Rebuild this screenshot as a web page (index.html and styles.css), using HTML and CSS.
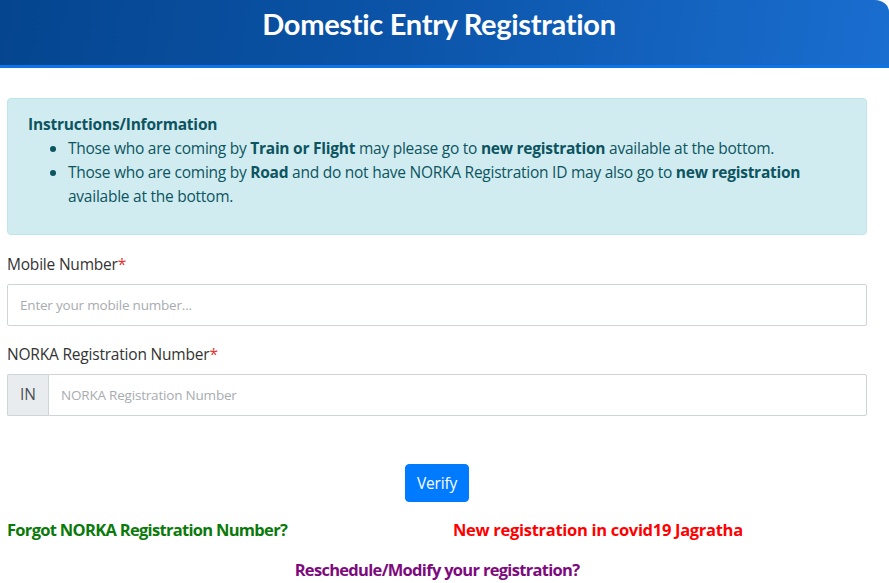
FILE: index.html
```html
<!DOCTYPE html>
<html lang="en">
<head>
<meta charset="utf-8">
<title>Domestic Entry Registration</title>
<link rel="stylesheet" href="styles.css">
</head>
<body>
<header class="banner">
  <h1 class="banner-title">Domestic Entry Registration</h1>
</header>
<main class="page">
  <section class="alert">
    <h2 class="alert-title">Instructions/Information</h2>
    <ul class="alert-list">
      <li>Those who are coming by <b>Train or Flight</b> may please go to <b>new registration</b> available at the bottom.</li>
      <li>Those who are coming by <b>Road</b> and do not have NORKA Registration ID may also go to <b>new registration</b> available at the bottom.</li>
    </ul>
  </section>
  <form class="form">
    <div class="field">
      <label class="label">Mobile Number<span class="req">*</span></label>
      <input class="input" type="text" placeholder="Enter your mobile number...">
    </div>
    <div class="field">
      <label class="label">NORKA Registration Number<span class="req">*</span></label>
      <div class="input-group">
        <span class="addon">IN</span>
        <input class="input input-joined" type="text" placeholder="NORKA Registration Number">
      </div>
    </div>
    <div class="actions">
      <button type="button" class="btn">Verify</button>
    </div>
  </form>
  <div class="links">
    <a class="link link-green" href="#">Forgot NORKA Registration Number?</a>
    <a class="link link-red" href="#">New registration in covid19 Jagratha</a>
  </div>
  <div class="links-center">
    <a class="link link-purple" href="#">Reschedule/Modify your registration?</a>
  </div>
</main>
</body>
</html>
```

FILE: styles.css
```css
html, body {
  margin: 0;
  padding: 0;
  background: #fff;
}
body {
  font-family: "Open Sans", "Noto Sans", sans-serif;
  color: #212529;
  font-size: 15.5px;
  line-height: 1.5;
}
.banner {
  height: 65px;
  background: linear-gradient(100deg, #05458f 0%, #0b54a8 45%, #1a6ed0 100%);
  border-bottom: 3px solid #0d73e6;
  border-top-right-radius: 14px 12px;
  display: flex;
  justify-content: center;
  align-items: flex-start;
}
.banner-title {
  margin: 4px 0 0 -11px;
  color: #fff;
  font-family: "Lato", "Noto Sans", sans-serif;
  font-weight: 700;
  font-size: 29px;
  line-height: 40px;
  letter-spacing: -0.3px;
}
.page {
  width: 860px;
  margin-left: 7px;
  padding-top: 30px;
}
.alert {
  background: #d1ecf1;
  border: 1px solid #bee5eb;
  border-radius: 4px;
  color: #0c5460;
  padding: 14px 20px 28px 20px;
  height: 93px;
}
.alert-title {
  margin: 0;
  font-size: 15.5px;
  font-weight: 700;
  line-height: 23px;
  letter-spacing: -0.2px;
}
.alert-list {
  margin: 0;
  padding-left: 40px;
  font-size: 15.5px;
  line-height: 24px;
  letter-spacing: -0.25px;
}
.alert-list b {
  font-weight: 700;
}
.form {
  margin-top: 17px;
}
.field {
  margin-bottom: 16px;
}
.label {
  display: block;
  font-size: 15.5px;
  line-height: 24px;
  margin-bottom: 8px;
  color: #333;
  letter-spacing: -0.2px;
}
.req {
  color: #e3342f;
}
.input {
  box-sizing: border-box;
  display: block;
  width: 100%;
  height: 42px;
  padding: 6px 12px;
  font-family: "Open Sans", "Noto Sans", sans-serif;
  font-size: 13.5px;
  color: #495057;
  background: #fff;
  border: 1px solid #ced4da;
  border-radius: 2px;
  outline: none;
  letter-spacing: -0.2px;
}
.input::placeholder {
  color: #a8acb1;
}
.input-group {
  display: flex;
}
.addon {
  box-sizing: border-box;
  width: 41px;
  height: 42px;
  display: flex;
  align-items: center;
  justify-content: center;
  background: #e9ecef;
  border: 1px solid #ced4da;
  border-right: none;
  border-radius: 2px 0 0 2px;
  color: #495057;
  font-size: 15.5px;
}
.input-joined {
  flex: 1;
  border-radius: 0 2px 2px 0;
}
.actions {
  display: flex;
  justify-content: center;
  padding-top: 32px;
}
.btn {
  background: #007bff;
  color: #fff;
  border: 1px solid #007bff;
  border-radius: 4px;
  height: 38px;
  padding: 0 11px;
  font-family: "Open Sans", "Noto Sans", sans-serif;
  font-size: 15.5px;
  letter-spacing: -0.2px;
}
.links {
  display: grid;
  grid-template-columns: 446px 1fr;
  margin-top: 16px;
}
.link {
  font-family: "Open Sans", "Noto Sans", sans-serif;
  font-weight: 700;
  font-size: 16.5px;
  line-height: 24px;
  text-decoration: none;
  letter-spacing: -0.7px;
}
.link-green { color: #0a7a0a; }
.link-red { color: #ff0000; letter-spacing: -0.3px; }
.link-purple { color: #7d0a7d; }
.links-center {
  display: flex;
  justify-content: center;
  margin-top: 16px;
}
```
